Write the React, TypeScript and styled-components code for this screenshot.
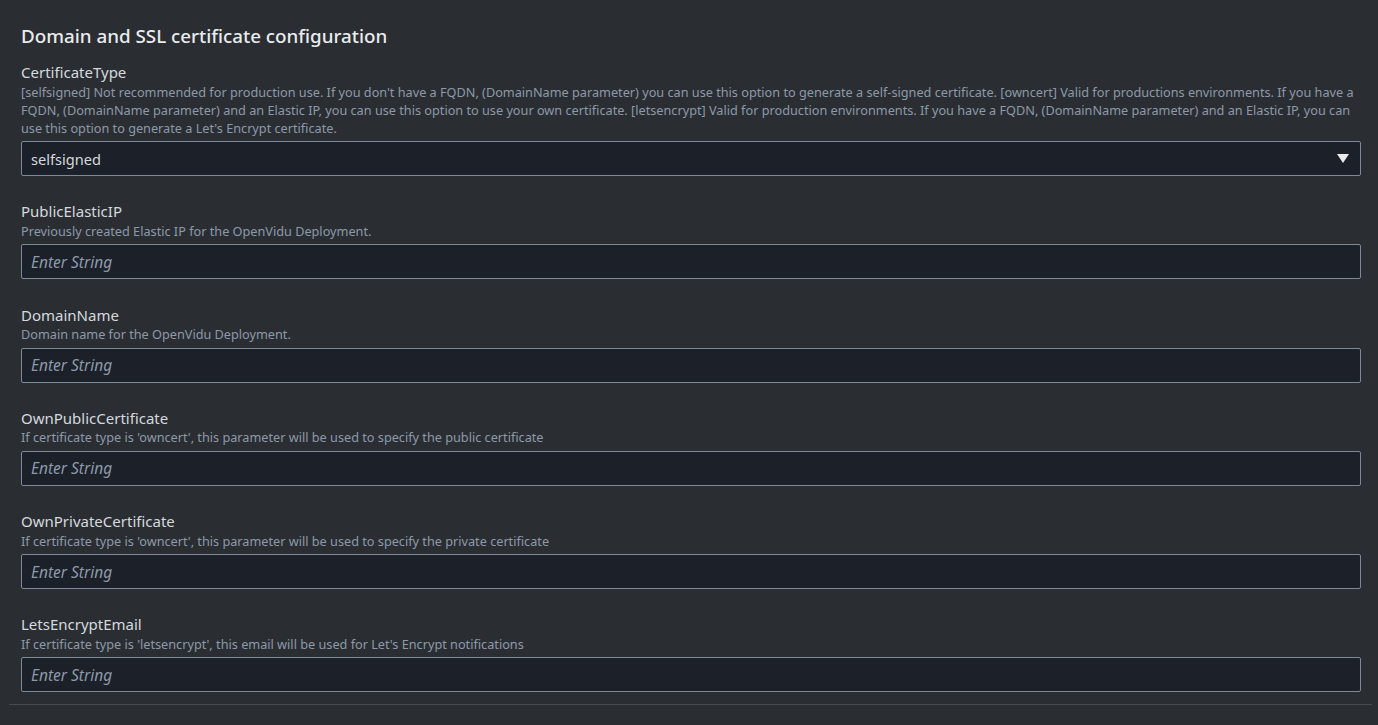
import React from "react";
import styled, { createGlobalStyle } from "styled-components";

const Global = createGlobalStyle`
  html, body { margin: 0; padding: 0; background: #2a2e33; }
  body { font-family: "Noto Sans", "Open Sans", sans-serif; }
`;

const Page = styled.div`
  width: 1378px;
  height: 725px;
  background: #2a2e33;
  overflow: hidden;
  box-sizing: border-box;
  padding: 0 6px 0 9px;
`;

const Section = styled.section`
  padding: 24px 11px 12px 12px;
  border-bottom: 1px solid #454b53;
  display: flex;
  flex-direction: column;
`;

const Heading = styled.h2`
  margin: 0 0 14px 0;
  font-size: 18.8px;
  line-height: 24px;
  font-weight: 500;
  color: #e9ebed;
`;

const Fields = styled.div`
  display: flex;
  flex-direction: column;
  gap: 25.25px;
`;

const Field = styled.div`
  display: flex;
  flex-direction: column;
`;

const Label = styled.label`
  font-size: 15px;
  line-height: 20px;
  color: #d5d9de;
`;

const Desc = styled.div`
  font-size: 12.7px;
  line-height: 18px;
  color: #8d99a8;
  padding-top: 0.5px;
  margin-bottom: 4.5px;
`;

const Box = styled.div`
  height: 35px;
  box-sizing: border-box;
  background: #1b2029;
  border: 1px solid #7d8998;
  border-radius: 2px;
  display: flex;
  align-items: center;
  justify-content: space-between;
  padding: 0 11px 0 9px;
`;

const Value = styled.span`
  color: #d5d9de;
  font-size: 14.6px;
`;

const Placeholder = styled.span`
  color: #8d99a8;
  font-style: italic;
  font-size: 15.5px;
`;

const Caret = styled.svg`
  width: 12px;
  height: 9px;
  display: block;
`;

const fields = [
  {
    label: "PublicElasticIP",
    desc: "Previously created Elastic IP for the OpenVidu Deployment.",
  },
  { label: "DomainName", desc: "Domain name for the OpenVidu Deployment." },
  {
    label: "OwnPublicCertificate",
    desc: "If certificate type is 'owncert', this parameter will be used to specify the public certificate",
  },
  {
    label: "OwnPrivateCertificate",
    desc: "If certificate type is 'owncert', this parameter will be used to specify the private certificate",
  },
  {
    label: "LetsEncryptEmail",
    desc: "If certificate type is 'letsencrypt', this email will be used for Let's Encrypt notifications",
  },
];

export default function App() {
  return (
    <>
      <Global />
      <Page>
        <Section>
          <Heading>Domain and SSL certificate configuration</Heading>
          <Fields>
            <Field>
              <Label>CertificateType</Label>
              <Desc>
                [selfsigned] Not recommended for production use. If you don't have a FQDN, (DomainName parameter) you can use this option to generate a self-signed certificate. [owncert] Valid for productions environments. If you have a FQDN, (DomainName parameter) and an Elastic IP, you can use this option to use your own certificate. [letsencrypt] Valid for production environments. If you have a FQDN, (DomainName parameter) and an Elastic IP, you can use this option to generate a Let's Encrypt certificate.
              </Desc>
              <Box>
                <Value>selfsigned</Value>
                <Caret viewBox="0 0 12 9">
                  <path d="M0 0 H12 L6 9 Z" fill="#e9ebed" />
                </Caret>
              </Box>
            </Field>
            {fields.map((f) => (
              <Field key={f.label}>
                <Label>{f.label}</Label>
                <Desc>{f.desc}</Desc>
                <Box>
                  <Placeholder>Enter String</Placeholder>
                </Box>
              </Field>
            ))}
          </Fields>
        </Section>
      </Page>
    </>
  );
}
